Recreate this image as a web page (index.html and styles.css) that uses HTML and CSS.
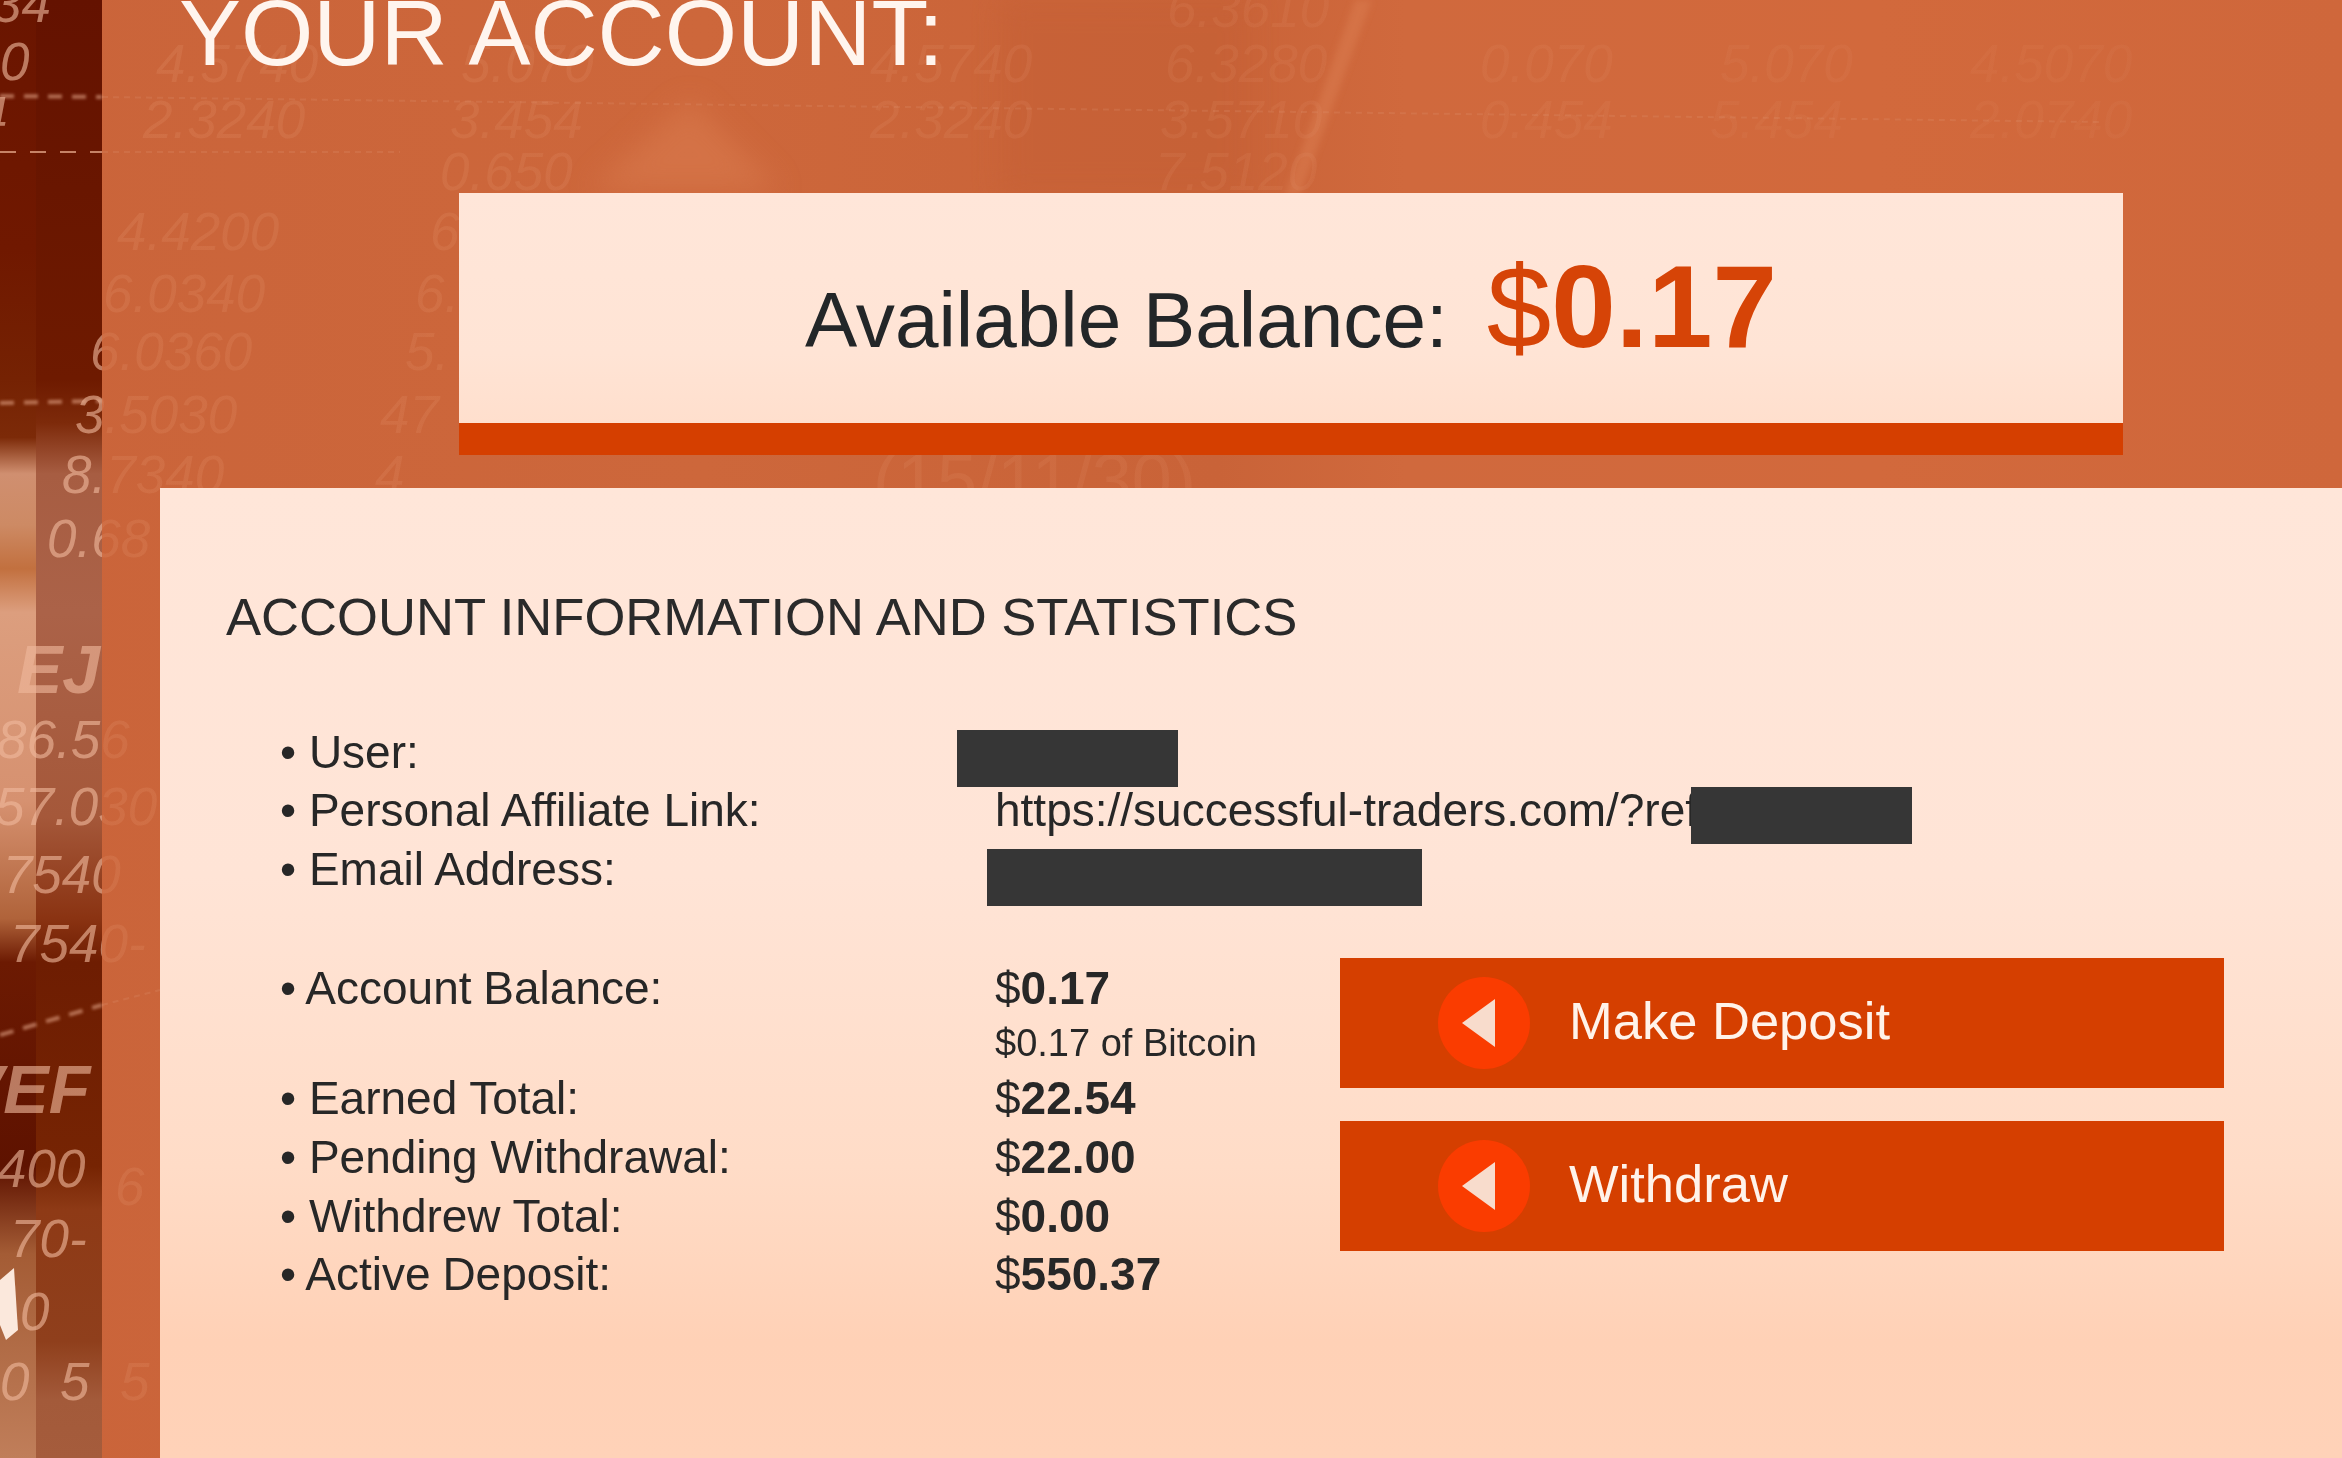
FILE: index.html
```html
<!DOCTYPE html>
<html lang="en">
<head>
<meta charset="utf-8">
<title>Your Account</title>
<link rel="stylesheet" href="styles.css">
</head>
<body>
<div class="page">
  <svg class="backdrop" width="2342" height="1458" viewBox="0 0 2342 1458" aria-hidden="true">
    <defs>
      <linearGradient id="col1" x1="0" y1="0" x2="0" y2="1">
        <stop offset="0" stop-color="#6a1500"/>
        <stop offset=".17" stop-color="#701800"/>
        <stop offset=".26" stop-color="#752203"/>
        <stop offset=".30" stop-color="#7c2a08"/>
        <stop offset=".325" stop-color="#d08f70"/>
        <stop offset=".36" stop-color="#cd8a64"/>
        <stop offset=".39" stop-color="#c2703f"/>
        <stop offset=".42" stop-color="#dc9e7e"/>
        <stop offset=".55" stop-color="#d69170"/>
        <stop offset=".63" stop-color="#b0633a"/>
        <stop offset=".66" stop-color="#6c1a02"/>
        <stop offset=".80" stop-color="#5e1200"/>
        <stop offset=".86" stop-color="#a45c35"/>
        <stop offset="1" stop-color="#c07e5a"/>
      </linearGradient>
      <linearGradient id="col2" x1="0" y1="0" x2="0" y2="1">
        <stop offset="0" stop-color="#641200"/>
        <stop offset=".26" stop-color="#6e1a00"/>
        <stop offset=".29" stop-color="#7d2a0a"/>
        <stop offset=".325" stop-color="#a75d42"/>
        <stop offset=".42" stop-color="#ab6248"/>
        <stop offset=".56" stop-color="#a5583a"/>
        <stop offset=".63" stop-color="#8a3312"/>
        <stop offset=".66" stop-color="#6e1d02"/>
        <stop offset=".80" stop-color="#762403"/>
        <stop offset=".83" stop-color="#8e3a16"/>
        <stop offset=".92" stop-color="#8f3f1c"/>
        <stop offset=".96" stop-color="#a35a3a"/>
        <stop offset="1" stop-color="#a55c3c"/>
      </linearGradient>
      <linearGradient id="numfill" gradientUnits="userSpaceOnUse" x1="0" y1="0" x2="2342" y2="0">
        <stop offset="0" stop-color="#efb89c" stop-opacity=".62"/>
        <stop offset=".0435" stop-color="#efb89c" stop-opacity=".62"/>
        <stop offset=".0436" stop-color="#e89a74" stop-opacity=".2"/>
        <stop offset=".3" stop-color="#e89a74" stop-opacity=".16"/>
        <stop offset=".55" stop-color="#e89a74" stop-opacity=".13"/>
        <stop offset="1" stop-color="#e89a74" stop-opacity=".07"/>
      </linearGradient>
      <filter id="soft" x="-30%" y="-30%" width="160%" height="160%"><feGaussianBlur stdDeviation="14"/></filter>
      <filter id="softer" x="-30%" y="-30%" width="160%" height="160%"><feGaussianBlur stdDeviation="3"/></filter>
      <filter id="glowline" x="-5%" y="-500%" width="110%" height="1100%"><feGaussianBlur stdDeviation="1.6"/></filter>
    </defs>

    <polygon class="glow" points="590,190 690,100 780,190" filter="url(#soft)"/>
    <polygon class="streak" points="1355,0 1372,0 1300,195 1285,195" filter="url(#softer)"/>
    <rect class="shade" x="1000" y="0" width="250" height="195" filter="url(#soft)"/>

    <rect x="0" y="0" width="36" height="1458" fill="url(#col1)"/>
    <rect x="36" y="0" width="66" height="1458" fill="url(#col2)"/>
    <polygon class="spark" points="0,1280 14,1268 18,1330 6,1340 0,1325"/>

    <g class="lines" filter="url(#glowline)">
      <line x1="0" y1="96" x2="102" y2="97"/>
      <line x1="0" y1="403" x2="102" y2="401"/>
      <line x1="0" y1="1035" x2="102" y2="1005"/>
    </g>
    <g class="lines thin">
      <line x1="0" y1="152" x2="102" y2="152"/>
    </g>
    <g class="lines dim">
      <line x1="102" y1="97" x2="2100" y2="122"/>
      <line x1="102" y1="152" x2="400" y2="152"/>
      <line x1="102" y1="1005" x2="160" y2="990"/>
    </g>

    <g class="nums">
      <text x="-8" y="22">34</text><text x="0" y="80">0</text><text x="-22" y="134">4</text>
      <text x="1167" y="27">6.3610</text>
      <text x="156" y="82">4.5740</text><text x="461" y="82">5.070</text><text x="870" y="82">4.5740</text><text x="1165" y="82">6.3280</text><text x="1480" y="82">0.070</text><text x="1720" y="82">5.070</text><text x="1970" y="82">4.5070</text>
      <text x="143" y="138">2.3240</text><text x="450" y="138">3.454</text><text x="870" y="138">2.3240</text><text x="1160" y="138">3.5710</text><text x="1480" y="138">0.454</text><text x="1710" y="138">5.454</text><text x="1970" y="138">2.0740</text>
      <text x="440" y="190">0.650</text><text x="1155" y="190">7.5120</text>
      <text x="117" y="250">4.4200</text><text x="430" y="250">6.</text>
      <text x="103" y="312">6.0340</text><text x="415" y="312">6.</text>
      <text x="90" y="370">6.0360</text><text x="405" y="370">5.</text>
      <text x="75" y="433">3.5030</text><text x="380" y="433">47</text>
      <text x="62" y="493">8.7340</text><text x="375" y="493">4</text>
      <text x="47" y="557">0.68</text>
      <text class="strong" x="17" y="693">EJ</text>
      <text x="-3" y="758">86.56</text>
      <text x="-5" y="825">57.030</text>
      <text x="-12" y="893">.7540</text>
      <text x="10" y="962">7540-</text>
      <text class="strong" x="-42" y="1113">VEF</text>
      <text x="-3" y="1187">400</text><text x="115" y="1205">6</text>
      <text x="10" y="1257">70-</text>
      <text x="20" y="1330">0</text>
      <text x="0" y="1400">0</text><text x="60" y="1400">5</text><text x="120" y="1400">5</text>
      <text class="wide" x="873" y="505">(15/11/30)</text>
    </g>
  </svg>

  <main class="content">
    <h1 class="title">YOUR ACCOUNT:</h1>

    <section class="balance">
      <span class="balance-label">Available Balance:</span>
      <span class="balance-value">$<b>0.17</b></span>
    </section>

    <section class="panel">
      <h2 class="panel-title">ACCOUNT INFORMATION AND STATISTICS</h2>

      <div class="list">
        <div class="row"><span>• User:</span><span class="value"><i class="redact redact-user"></i></span></div>
        <div class="row"><span>• Personal Affiliate Link:</span><span class="value">https://successful-traders.com/?ref<i class="redact redact-link"></i></span></div>
        <div class="row"><span>• Email Address:</span><span class="value"><i class="redact redact-email"></i></span></div>
      </div>

      <div class="lower">
        <div class="list lower-list">
          <div class="row"><span class="tight">• Account Balance:</span><span class="value">$<b>0.17</b></span></div>
          <div class="row row-sub"><span></span><span class="value">$0.17 of Bitcoin</span></div>
          <div class="row"><span>• Earned Total:</span><span class="value">$<b>22.54</b></span></div>
          <div class="row"><span>• Pending Withdrawal:</span><span class="value">$<b>22.00</b></span></div>
          <div class="row"><span>• Withdrew Total:</span><span class="value">$<b>0.00</b></span></div>
          <div class="row"><span class="tight">• Active Deposit:</span><span class="value">$<b>550.37</b></span></div>
        </div>

        <div class="actions">
          <a class="btn" href="#">
            <span class="btn-icon"><svg width="33" height="48" viewBox="0 0 33 48"><polygon points="0,24 33,0 33,48"/></svg></span>
            Make Deposit
          </a>
          <a class="btn" href="#">
            <span class="btn-icon"><svg width="33" height="48" viewBox="0 0 33 48"><polygon points="0,24 33,0 33,48"/></svg></span>
            Withdraw
          </a>
        </div>
      </div>
    </section>
  </main>
</div>
</body>
</html>
```

FILE: styles.css
```css
* { box-sizing: border-box; }
html, body { margin: 0; padding: 0; }
body {
  width: 2342px;
  height: 1458px;
  overflow: hidden;
  font-family: "Liberation Sans", Arial, sans-serif;
  color: #262626;
}

.page {
  position: relative;
  width: 2342px;
  height: 1458px;
  overflow: hidden;
  padding-left: 102px;
  background: linear-gradient(90deg, #ca643a 0, #cd673b 30%, #c96338 52%, #d0693d 60%, #d2693c 80%, #cf673b 100%);
}

/* Decorative photo backdrop */
.backdrop { position: absolute; left: 0; top: 0; }
.glow { fill: #da7c50; opacity: .55; }
.streak { fill: #da7c50; opacity: .55; }
.shade { fill: #c45e34; opacity: .45; }
.nums text {
  font-family: "Liberation Sans", Arial, sans-serif;
  font-size: 53px;
  font-style: italic;
  fill: url(#numfill);
}
.nums .strong { font-weight: 700; font-size: 68px; }
.nums .wide { font-size: 72px; font-style: normal; }
.spark { fill: #fbe8dc; }
.lines line { stroke: #e6a98a; stroke-width: 4; stroke-dasharray: 14 10; opacity: .6; }
.lines.thin line { stroke-width: 2; stroke-dasharray: 16 14; opacity: .75; }
.lines.dim line { stroke-width: 2; stroke-dasharray: 6 5; opacity: .16; }

.content { position: relative; }

.title {
  margin: -13px 0 0 77px;
  font-size: 93px;
  line-height: 93px;
  font-weight: 400;
  color: #fff5ee;
  white-space: nowrap;
}

.balance {
  display: flex;
  justify-content: center;
  align-items: baseline;
  gap: 39px;
  width: 1664px;
  height: 262px;
  margin: 113px 0 0 357px;
  padding-top: 64px;
  border-bottom: 32px solid #d53f00;
  background: linear-gradient(180deg, #ffe6d9 0, #ffe4d5 70%, #ffdfcd 100%);
}
.balance-label { font-size: 78.3px; line-height: 100px; color: #232628; }
.balance-value { font-size: 116px; line-height: 100px; color: #d64407; }

.panel {
  width: 2182px;
  height: 970px;
  margin: 33px 0 0 58px;
  padding: 99px 0 0 66px;
  background: linear-gradient(180deg, #ffe6d9 0, #ffe4d6 40%, #ffdcc7 70%, #ffd1b6 88%, #ffd2b8 100%);
}
.panel-title {
  margin: 0 0 75.5px;
  font-size: 52.6px;
  line-height: 60px;
  font-weight: 400;
  color: #2a2a2a;
  white-space: nowrap;
}

.list { padding-left: 54px; }
.row {
  display: grid;
  grid-template-columns: 715px 1fr;
  font-size: 46px;
  line-height: 58.7px;
  white-space: nowrap;
  color: #272727;
}
.row-sub { font-size: 38px; line-height: 52px; }
.tight { word-spacing: -1px; }
.value { position: relative; }
.value b { font-weight: 700; }

.redact { position: absolute; display: block; height: 57px; background: #363636; }
.redact-user { left: -38px; top: 7.5px; width: 221px; }
.redact-link { left: 696px; top: 6px; width: 221px; }
.redact-email { left: -8px; top: 9px; width: 435px; }

.lower { display: flex; margin-top: 60px; }
.lower-list { width: 1114px; flex: none; }

.actions { display: flex; flex-direction: column; gap: 33px; width: 884px; margin-top: -1px; }
.btn {
  display: flex;
  align-items: center;
  gap: 39px;
  height: 130px;
  padding: 0 0 4px 98px;
  background: #d53f00;
  color: #fff3ea;
  font-size: 52.5px;
  line-height: 60px;
  text-decoration: none;
}
.btn-icon {
  display: flex;
  align-items: center;
  justify-content: center;
  flex: none;
  width: 92px;
  height: 92px;
  margin-top: 4px;
  padding-right: 11px;
  border-radius: 50%;
  background: #fa3c00;
}
.btn-icon polygon { fill: #f8dccc; }
```
